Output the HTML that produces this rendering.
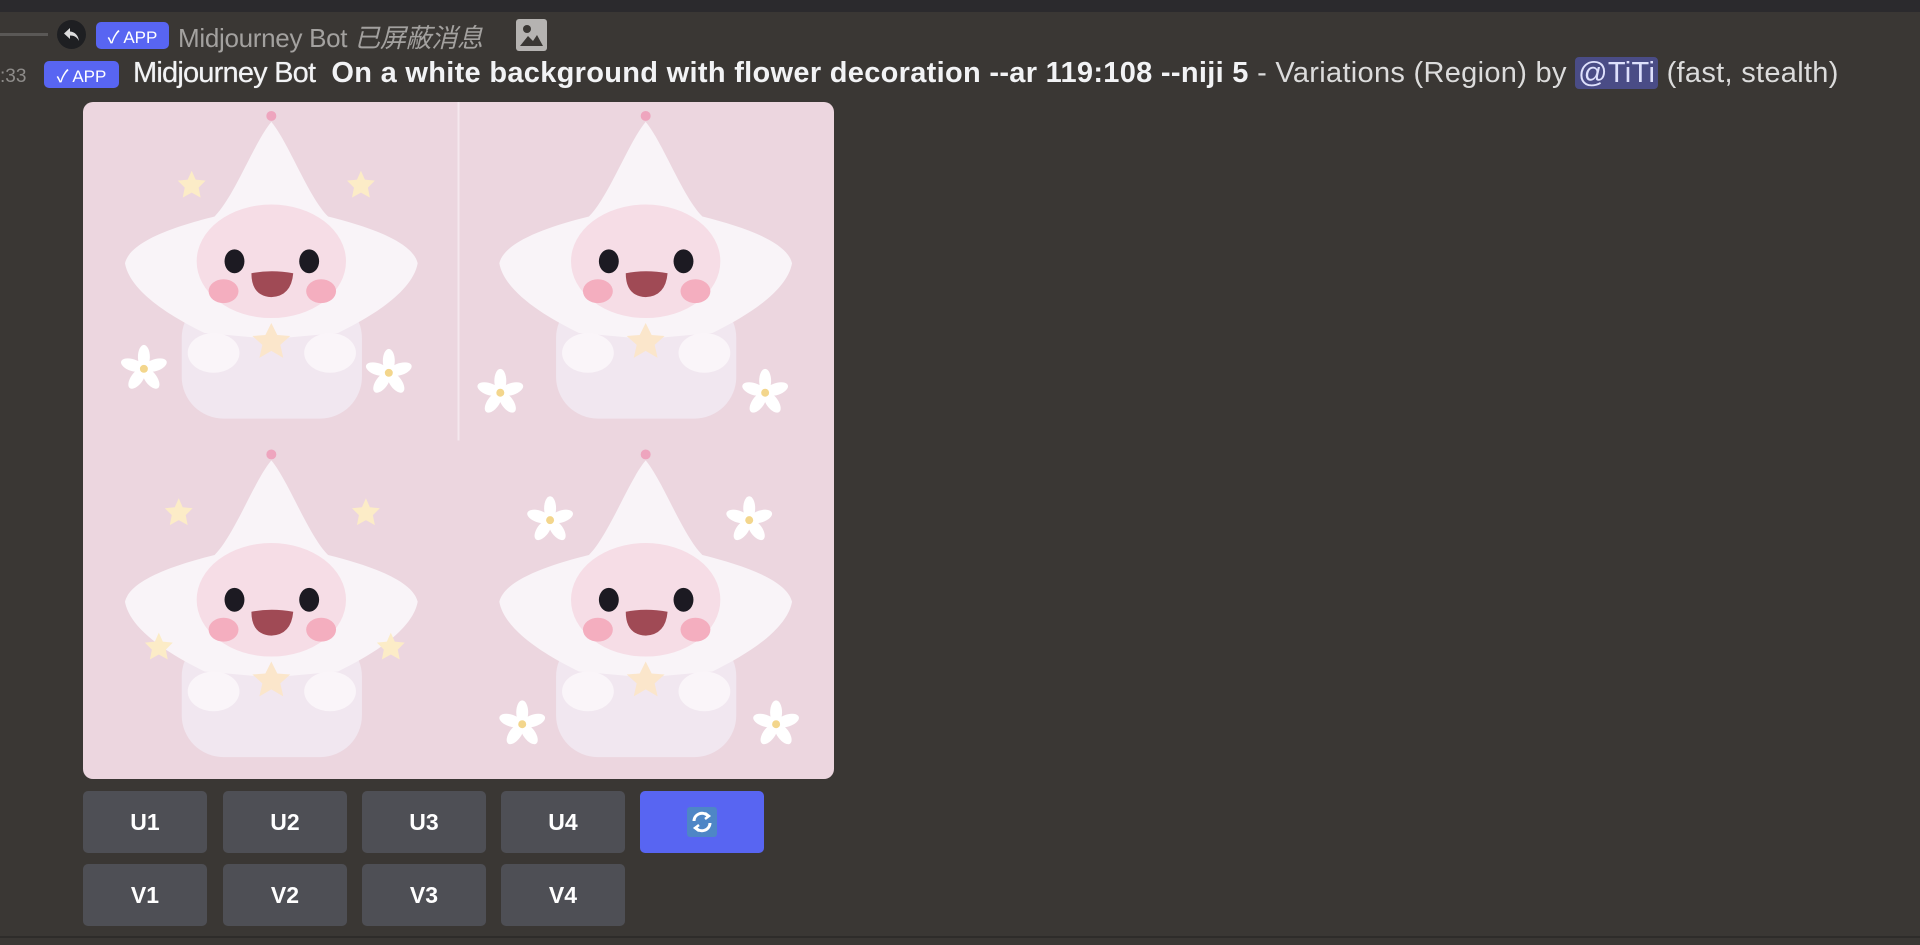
<!DOCTYPE html>
<html><head><meta charset="utf-8"><style>
*{margin:0;padding:0;box-sizing:border-box}
body{width:1920px;height:945px;background:#3a3734;overflow:hidden;position:relative;font-family:"Liberation Sans","Noto Sans CJK SC",sans-serif;color:#f2f3f5}
.top{position:absolute;left:0;top:0;width:1920px;height:12px;background:#2b2a2d}
.badge{position:absolute;background:#5865f2;color:#fff;border-radius:5px;font-size:17px;font-weight:500;display:flex;align-items:center;justify-content:center;gap:3px}
.btn{position:absolute;width:124px;height:62px;background:#4e4f55;border-radius:5px;color:#fff;font-size:23px;font-weight:bold;display:flex;align-items:center;justify-content:center}
</style></head><body>
<div class="top"></div>
<div style="position:absolute;left:0;top:33px;width:48px;height:3px;background:#5a5856"></div>
<div style="position:absolute;left:57px;top:20px;width:29px;height:29px;border-radius:50%;background:#1e1f22;display:flex;align-items:center;justify-content:center">
<svg width="17" height="15" viewBox="0 0 17 15"><path d="M7 1 L1 6.5 L7 12 V8.5 C11 8.5 14 10 16 14 C15 8 12 5 7 4.5 Z" fill="#ddd"/></svg></div>
<div class="badge" style="left:96px;top:22px;width:73px;height:27px">✓ APP</div>
<div style="position:absolute;left:178px;top:18px;font-size:26px;color:#a3a19f;white-space:nowrap;letter-spacing:-0.3px">Midjourney Bot <i>已屏蔽消息</i></div>
<div style="position:absolute;left:516px;top:19px;width:31px;height:32px;background:#b5b3b1;border-radius:3px"><svg width="31" height="32" viewBox="0 0 31 32"><circle cx="11" cy="10" r="4" fill="#3a3734"/><path d="M4 27 L12 17 L17 22 L21 16 L27 27 Z" fill="#3a3734"/></svg></div>
<div style="position:absolute;left:0;top:66px;font-size:19px;color:#8e8c8a">:33</div>
<div class="badge" style="left:44px;top:61px;width:75px;height:27px">✓ APP</div>
<div style="position:absolute;left:133px;top:57px;font-size:29px;white-space:nowrap;color:#f2f3f5"><span style="letter-spacing:-0.8px;text-shadow:0 0 0.6px #fff">Midjourney Bot</span>&nbsp; <b style="letter-spacing:0.3px">On a white background with flower decoration --ar 119:108 --niji 5</b><span style="color:#dcdcdc;letter-spacing:0.3px"> - Variations (Region) by <span style="background:#4a4c86;border-radius:4px;padding:0 3px;color:#dee0fc">@TiTi</span> (fast, stealth)</span></div>

<div style="position:absolute;left:83px;top:102px;width:751px;height:677px;border-radius:10px;overflow:hidden;background:#ecd6df">
<svg width="751" height="677" viewBox="0 0 752 680">
<defs><g id="ch">
<circle cx="188" cy="14" r="5" fill="#eea5be"/>
<rect x="98" y="195" width="181" height="123" rx="42" fill="#f1e7f0"/>
<path d="M188 20 C205 40 225 95 245 115 C285 125 330 140 335 162 C330 190 290 215 255 232 L188 238 L121 232 C86 215 46 190 41 162 C46 140 91 125 131 115 C151 95 171 40 188 20Z" fill="#f9f4f8"/>
<ellipse cx="188" cy="160" rx="75" ry="57" fill="#f6dde6"/>
<ellipse cx="151" cy="160" rx="10" ry="12" fill="#1c1a22"/><ellipse cx="226" cy="160" rx="10" ry="12" fill="#1c1a22"/>
<ellipse cx="140" cy="190" rx="15" ry="12" fill="#f4aebf"/><ellipse cx="238" cy="190" rx="15" ry="12" fill="#f4aebf"/>
<path d="M168 172 Q188 168 210 172 Q208 195 188 196 Q168 195 168 172 Z" fill="#a04a55"/>
<ellipse cx="130" cy="252" rx="26" ry="20" fill="#faf5f9"/><ellipse cx="247" cy="252" rx="26" ry="20" fill="#faf5f9"/>
<path d="M188 222 l6 12 13 1 -10 9 3 13 -12 -7 -12 7 3 -13 -10 -9 13 -1z" fill="#fbe6cb"/>
</g>
<g id="st"><path d="M0 -14 l4 9 10 1 -7 7 2 10 -9 -5 -9 5 2 -10 -7 -7 10 -1z" fill="#fcecc7"/></g>
<g id="fl"><g fill="#fff"><ellipse cx="0" cy="-12" rx="6" ry="12"/><ellipse cx="0" cy="-12" rx="6" ry="12" transform="rotate(72)"/><ellipse cx="0" cy="-12" rx="6" ry="12" transform="rotate(144)"/><ellipse cx="0" cy="-12" rx="6" ry="12" transform="rotate(216)"/><ellipse cx="0" cy="-12" rx="6" ry="12" transform="rotate(288)"/></g><circle r="4" fill="#f3d68c"/></g>
</defs>
<line x1="376" y1="0" x2="376" y2="340" stroke="#f5e8ee" stroke-width="2"/>
<use href="#ch"/><use href="#ch" x="376"/><use href="#ch" y="340"/><use href="#ch" x="376" y="340"/>
<use href="#st" x="108" y="83"/><use href="#st" x="278" y="83"/>
<use href="#st" x="95" y="412"/><use href="#st" x="283" y="412"/><use href="#st" x="75" y="547"/><use href="#st" x="308" y="547"/>
<use href="#fl" x="60" y="268"/><use href="#fl" x="306" y="272"/>
<use href="#fl" x="418" y="292"/><use href="#fl" x="684" y="292"/>
<use href="#fl" x="468" y="420"/><use href="#fl" x="668" y="420"/><use href="#fl" x="440" y="625"/><use href="#fl" x="695" y="625"/>
</svg></div>

<div class="btn" style="left:83px;top:791px">U1</div>
<div class="btn" style="left:223px;top:791px">U2</div>
<div class="btn" style="left:362px;top:791px">U3</div>
<div class="btn" style="left:501px;top:791px">U4</div>
<div class="btn" style="left:640px;top:791px;background:#5865f2"><div style="width:30px;height:30px;background:#4e86c6;border-radius:3px;display:flex;align-items:center;justify-content:center"><svg width="24" height="24" viewBox="0 0 24 24" fill="none" stroke="#fff" stroke-width="3"><path d="M4 11 A8 8 0 0 1 18 6"/><path d="M20 13 A8 8 0 0 1 6 18"/><path d="M15 3 L19 6 L15 9" stroke-width="2.5"/><path d="M9 21 L5 18 L9 15" stroke-width="2.5"/></svg></div></div>
<div class="btn" style="left:83px;top:864px">V1</div>
<div class="btn" style="left:223px;top:864px">V2</div>
<div class="btn" style="left:362px;top:864px">V3</div>
<div class="btn" style="left:501px;top:864px">V4</div>
<div style="position:absolute;left:0;top:936px;width:1920px;height:2px;background:#2e2c2a"></div>
</body></html>
